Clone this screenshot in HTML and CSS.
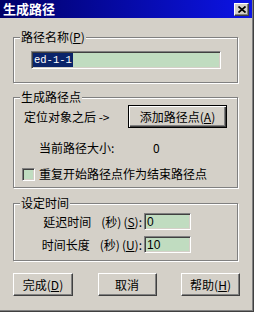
FILE: index.html
```html
<!DOCTYPE html>
<html lang="zh-CN">
<head>
    <meta charset="UTF-8">
    <title>生成路径</title>
    <link rel="stylesheet" href="styles.css">
</head>
<body>
    <div class="window">
        <div class="titlebar">
            <span class="title">生成路径</span>
            <span class="close">
                <svg width="8" height="7" viewBox="0 0 8 7"><path d="M0.5 0.5L7.5 6.5M7.5 0.5L0.5 6.5" stroke="#000" stroke-width="1.7"/></svg>
            </span>
        </div>

        <div class="content">
            <div class="group group-name">
                <div class="group-title">路径名称(<u>P</u>)</div>
                <div class="field field-name"><span class="sel">ed-1-1</span></div>
            </div>

            <div class="group group-points">
                <div class="group-title">生成路径点</div>
                <div class="row row-add">
                    <span>定位对象之后 -&gt;</span>
                    <span class="btn btn-default btn-add">添加路径点(<u>A</u>)</span>
                </div>
                <div class="row row-size">
                    <span class="size-label">当前路径大小:</span>
                    <span>0</span>
                </div>
                <div class="row row-check">
                    <span class="check"></span>
                    <span>重复开始路径点作为结束路径点</span>
                </div>
            </div>

            <div class="group group-time">
                <div class="group-title">设定时间</div>
                <div class="row row-time">
                    <span class="time-label">延迟时间<span class="unit">(秒)</span>(<u>S</u>):</span>
                    <span class="field field-num">0</span>
                </div>
                <div class="row row-time row-time2">
                    <span class="time-label">时间长度<span class="unit">(秒)</span>(<u>U</u>):</span>
                    <span class="field field-num">10</span>
                </div>
            </div>

            <div class="actions">
                <span class="btn btn-ok">完成(<u>D</u>)</span>
                <span class="btn btn-cancel">取消</span>
                <span class="btn btn-help">帮助(<u>H</u>)</span>
            </div>
        </div>
    </div>
</body>
</html>
```

FILE: styles.css
```css
body {
    margin: 0;
    background: #d4d0c8;
    font-family: "Noto Sans CJK SC", "Liberation Sans", sans-serif;
    font-size: 12px;
    color: #000;
}
.window {
    width: 254px;
    height: 312px;
    box-sizing: border-box;
    padding: 0 2px 2px 0;
    background: #d4d0c8;
    box-shadow: inset -1px -1px #404040, inset -2px -2px #808080;
}
.titlebar {
    height: 18px;
    display: flex;
    align-items: center;
    justify-content: space-between;
    padding: 0 3px;
    background: linear-gradient(to right, #000068, #0c14e6);
}
.title {
    color: #fff;
    font-weight: bold;
    font-size: 13px;
    line-height: 16px;
}
.close {
    width: 15px;
    height: 13px;
    box-sizing: border-box;
    display: flex;
    align-items: center;
    justify-content: center;
    background: #d4d0c8;
    border: 1px solid;
    border-color: #fff #404040 #404040 #fff;
    box-shadow: inset -1px -1px #808080;
}
.content {
    display: flex;
    flex-direction: column;
    padding: 0 14px 0 13px;
}
.group {
    display: flex;
    flex-direction: column;
    border: 1px solid #808080;
    box-shadow: inset 1px 1px #fff, 1px 1px #fff;
}
.group-title {
    align-self: flex-start;
    margin: -8px 0 0 6px;
    padding: 0 1px;
    line-height: 14px;
    background: #d4d0c8;
}
.group-name {
    margin-top: 19px;
    padding-bottom: 13px;
}
.group-points {
    margin-top: 14px;
    padding-bottom: 6px;
}
.group-time {
    margin-top: 15px;
    padding-bottom: 7px;
}
.field {
    box-sizing: border-box;
    display: flex;
    align-items: center;
    background: #c0dcc0;
    border: 1px solid;
    border-color: #808080 #fff #fff #808080;
    box-shadow: inset 1px 1px #404040, inset -1px -1px #d4d0c8;
}
.field-name {
    width: 190px;
    height: 18px;
    margin: 7px 0 0 17px;
    padding-left: 1px;
}
.sel {
    background: #0a246a;
    color: #fff;
    font-family: "Liberation Mono", monospace;
    font-size: 10.5px;
    line-height: 14px;
    padding: 0 1px;
}
.row {
    display: flex;
    align-items: center;
    line-height: 14px;
}
.row-add {
    height: 23px;
    margin-top: 1px;
    padding: 0 10px;
    justify-content: space-between;
}
.row-size {
    margin-top: 13px;
    padding-left: 25px;
}
.size-label {
    width: 114px;
}
.row-check {
    height: 14px;
    margin-top: 12px;
    padding-left: 8px;
}
.check {
    width: 13px;
    height: 13px;
    box-sizing: border-box;
    margin-right: 4px;
    background: #c0dcc0;
    border: 1px solid;
    border-color: #808080 #fff #fff #808080;
    box-shadow: inset 1px 1px #404040, inset -1px -1px #d4d0c8;
}
.row-time {
    height: 17px;
    margin-top: 3px;
}
.row-time2 {
    margin-top: 6px;
}
.time-label {
    width: 128px;
    text-align: right;
}
.unit {
    margin-left: 10px;
    margin-right: 2px;
}
.field-num {
    width: 47px;
    height: 17px;
    margin-left: 2px;
    padding-left: 2px;
    font-family: "Liberation Sans", sans-serif;
    font-size: 12px;
}
.btn {
    box-sizing: border-box;
    height: 23px;
    display: flex;
    align-items: center;
    justify-content: center;
    background: #d4d0c8;
    border: 1px solid;
    border-color: #fff #404040 #404040 #fff;
    box-shadow: inset -1px -1px #808080;
}
.btn-default {
    border-color: #000;
    box-shadow: inset 1px 1px #fff, inset -1px -1px #404040, inset -2px -2px #808080;
}
.btn-add {
    width: 99px;
}
.actions {
    display: flex;
    justify-content: space-between;
    margin: 12px -2px 0 0;
}
.btn-ok {
    width: 60px;
}
.btn-cancel,
.btn-help {
    width: 59px;
}
```
